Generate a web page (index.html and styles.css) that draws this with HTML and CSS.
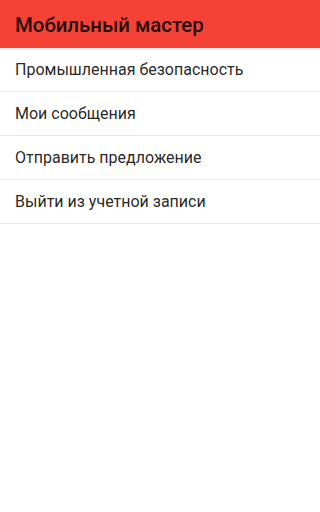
FILE: index.html
```html
<!DOCTYPE html>
<html lang="ru">
<head>
<meta charset="utf-8">
<link rel="stylesheet" href="styles.css">
</head>
<body>
<header class="toolbar"><h1 class="title">Мобильный мастер</h1></header>
<ul class="menu">
  <li class="item">Промышленная безопасность</li>
  <li class="item">Мои сообщения</li>
  <li class="item">Отправить предложение</li>
  <li class="item">Выйти из учетной записи</li>
</ul>
</body>
</html>
```
FILE: styles.css
```css
html, body { margin: 0; padding: 0; background: #fff; }
body { font-family: Roboto, "Noto Sans", sans-serif; min-height: 512px; }
.toolbar {
  height: 48px;
  background: #f44336;
  display: flex;
  align-items: center;
  padding: 0 15px;
  box-shadow: 0 1px 2px rgba(0,0,0,0.15);
  position: relative;
}
.title { margin: 0; padding-top: 1px; font-size: 20.4px; font-weight: 500; color: rgba(0,0,0,0.87); }
.menu { list-style: none; margin: 0; padding: 0; }
.item {
  height: 43px;
  border-bottom: 1px solid #e6e6e6;
  display: flex;
  align-items: center;
  padding: 0 15px;
  font-size: 16px;
  color: rgba(0,0,0,0.87);
}
```
